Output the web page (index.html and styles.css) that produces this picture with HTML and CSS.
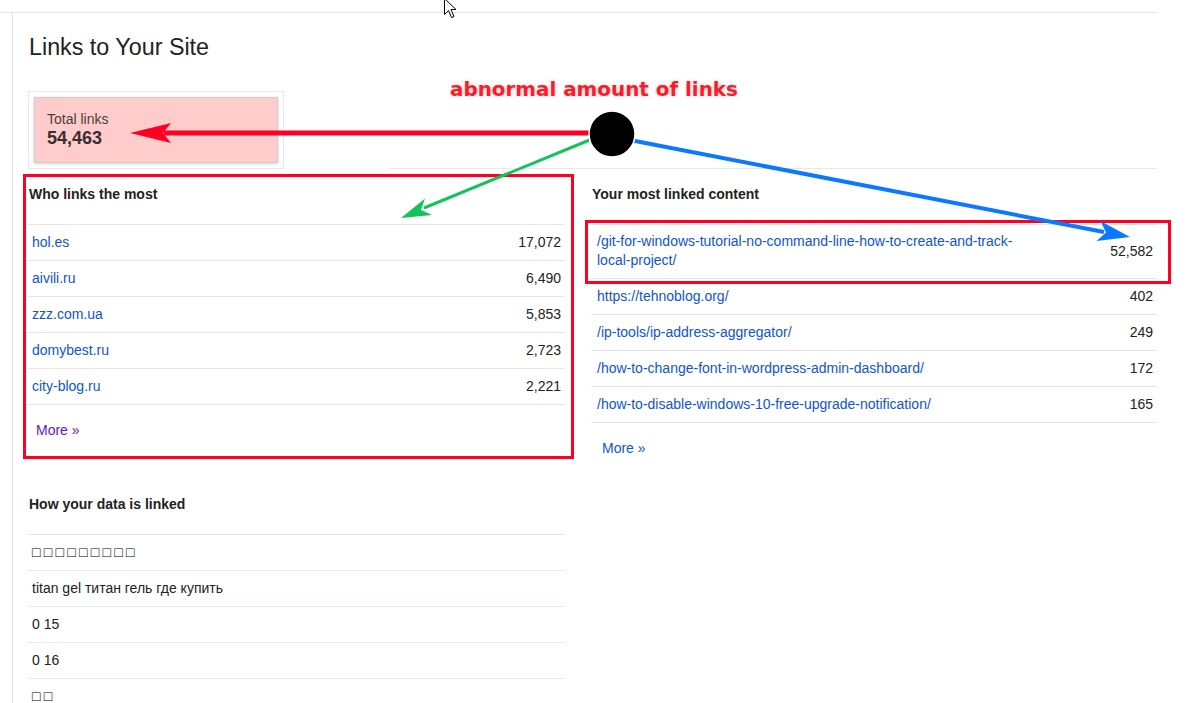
FILE: index.html
```html
<!DOCTYPE html>
<html lang="en">
<head>
    <meta charset="UTF-8">
    <meta name="viewport" content="width=device-width, initial-scale=1.0">
    <title>Links to Your Site</title>
    <link rel="stylesheet" href="styles.css">
</head>
<body>
    <div class="topline"></div>
    <div class="page">
        <h1>Links to Your Site</h1>
        <div class="summary">
            <div class="stat">
                <div class="stat-in">
                    <div class="stat-label">Total links</div>
                    <div class="stat-num">54,463</div>
                </div>
            </div>
            <div class="summary-rule"></div>
        </div>
        <div class="cols">
            <div class="col">
                <h2>Who links the most</h2>
                <div class="row"><a href="#">hol.es</a><span>17,072</span></div>
                <div class="row"><a href="#">aivili.ru</a><span>6,490</span></div>
                <div class="row"><a href="#">zzz.com.ua</a><span>5,853</span></div>
                <div class="row"><a href="#">domybest.ru</a><span>2,723</span></div>
                <div class="row"><a href="#">city-blog.ru</a><span>2,221</span></div>
                <a class="more visited" href="#">More &raquo;</a>

                <h2 class="sec3">How your data is linked</h2>
                <div class="row blue"><span class="tofu">□□□□□□□□□</span></div>
                <div class="row blue"><span>titan gel титан гель где купить</span></div>
                <div class="row blue"><span>0 15</span></div>
                <div class="row blue"><span>0 16</span></div>
                <div class="row blue"><span class="tofu">□□</span></div>
            </div>
            <div class="col">
                <h2>Your most linked content</h2>
                <div class="row tall"><a class="url" href="#">/git-for-windows-tutorial-no-command-line-how-to-create-and-track-local-project/</a><span>52,582</span></div>
                <div class="row"><a href="#">https://tehnoblog.org/</a><span>402</span></div>
                <div class="row"><a href="#">/ip-tools/ip-address-aggregator/</a><span>249</span></div>
                <div class="row"><a href="#">/how-to-change-font-in-wordpress-admin-dashboard/</a><span>172</span></div>
                <div class="row"><a href="#">/how-to-disable-windows-10-free-upgrade-notification/</a><span>165</span></div>
                <a class="more right" href="#">More &raquo;</a>
            </div>
        </div>
    </div>

    <!-- annotations drawn on top of the screenshot -->
    <div class="overlay">
        <div class="note">abnormal amount of links</div>
        <svg width="1200" height="703" viewBox="0 0 1200 703">
            <rect x="24.5" y="175.5" width="548" height="282" fill="none" stroke="#ff0022" stroke-width="3"/>
            <rect x="586.5" y="221.5" width="583" height="61" fill="none" stroke="#ff0022" stroke-width="3"/>
            <line x1="595" y1="133" x2="164" y2="133" stroke="#ff0022" stroke-width="5"/>
            <polygon points="130,133 171,123 163,133 171,143" fill="#ff0022"/>
            <line x1="592" y1="139" x2="424" y2="208" stroke="#10c45a" stroke-width="3"/>
            <polygon points="401,218 425,198.5 421,210 432,215" fill="#10c45a"/>
            <line x1="630" y1="140" x2="1104" y2="232" stroke="#0a78ff" stroke-width="4"/>
            <polygon points="1130,237 1100.5,221 1106,232.5 1096.5,241" fill="#0a78ff"/>
            <circle cx="612" cy="134" r="23" fill="#000" stroke="#fff" stroke-width="1.5"/>
            <path d="M444.5 -1.5 L444.5 14.5 L448.5 10.5 L451.5 17.5 L454 16.5 L451 9.5 L456 9.5 Z" fill="#fff" stroke="#000" stroke-width="1"/>
        </svg>
    </div>
</body>
</html>
```

FILE: styles.css
```css
body {
    margin:0;
    background:#fff;
    font-family:"Liberation Sans", Arial, sans-serif;
    font-size:14px; color:#222;
}
a {text-decoration:none; color:#15c;}
.topline {
    width:1157px; height:12px;
    border-bottom:1px solid #e3e3e3;
}
.page {
    margin-left:12px;
    border-left:1px solid #e3e3e3;
    padding:19px 0 0 15px;
    width:1129px; min-height:690px;
}
.page h1 {
    margin:0; padding-left:1px;
    font-size:23.3px; font-weight:normal;
    line-height:30px; color:#222;
}
.summary {
    display:flex;
    margin-top:29px;
}
.stat {
    border:1px solid #e8e8e8;
    padding:5px;
}
.stat-in {
    width:218px;
    padding:13px 12px;
    background:#ffcccc;
    border:1px solid #cdcdcd;
    box-shadow:0 1px 3px rgba(0,0,0,.18);
}
.stat-label {line-height:16px; color:#4a4040;}
.stat-num {
    line-height:22px;
    font-size:18px; font-weight:bold;
    color:#3a3030;
}
.summary-rule {
    flex:1;
    margin-left:105px;
    border-bottom:1px solid #e8e8e8;
}
.cols {
    display:grid;
    grid-template-columns:537px 566px;
    column-gap:26px;
}
.col {display:flex; flex-direction:column;}
.col h2 {
    margin:0;
    padding:15px 0 20px 1px;
    font-size:14px; line-height:20px;
    border-bottom:1px solid #e5e5e5;
}
.col h2.sec3 {margin-top:54px; padding-top:0;}
.row {
    display:flex;
    justify-content:space-between;
    align-items:center;
    padding:0 4px;
    line-height:35px;
    border-bottom:1px solid #e5e5e5;
}
.row.blue {border-bottom-color:#e4ebf4;}
.row.tall {line-height:19px; padding:7px 4px 8px 6px;}
.row .url {max-width:420px;}
.col:last-child .row {padding-left:6px;}
.tofu {
    font-size:14px; color:#000;
    letter-spacing:3.3px;
}
.more {
    align-self:flex-start;
    margin-top:15px;
    padding-left:8px;
    line-height:20px;
}
.more.visited {color:#6611cc;}
.more.right {padding-left:11px;}
.overlay {
    position:absolute;
    left:0; top:0;
    width:1200px; height:703px;
    pointer-events:none;
}
.overlay svg {position:absolute; left:0; top:0;}
.note {
    position:absolute;
    left:450px; top:78px;
    font-family:"DejaVu Sans", sans-serif;
    font-size:19.9px; font-weight:bold;
    line-height:24px;
    color:#ff1a2a;
    text-shadow:0 0 4px rgba(0,0,0,.2);
    white-space:nowrap;
}
```
